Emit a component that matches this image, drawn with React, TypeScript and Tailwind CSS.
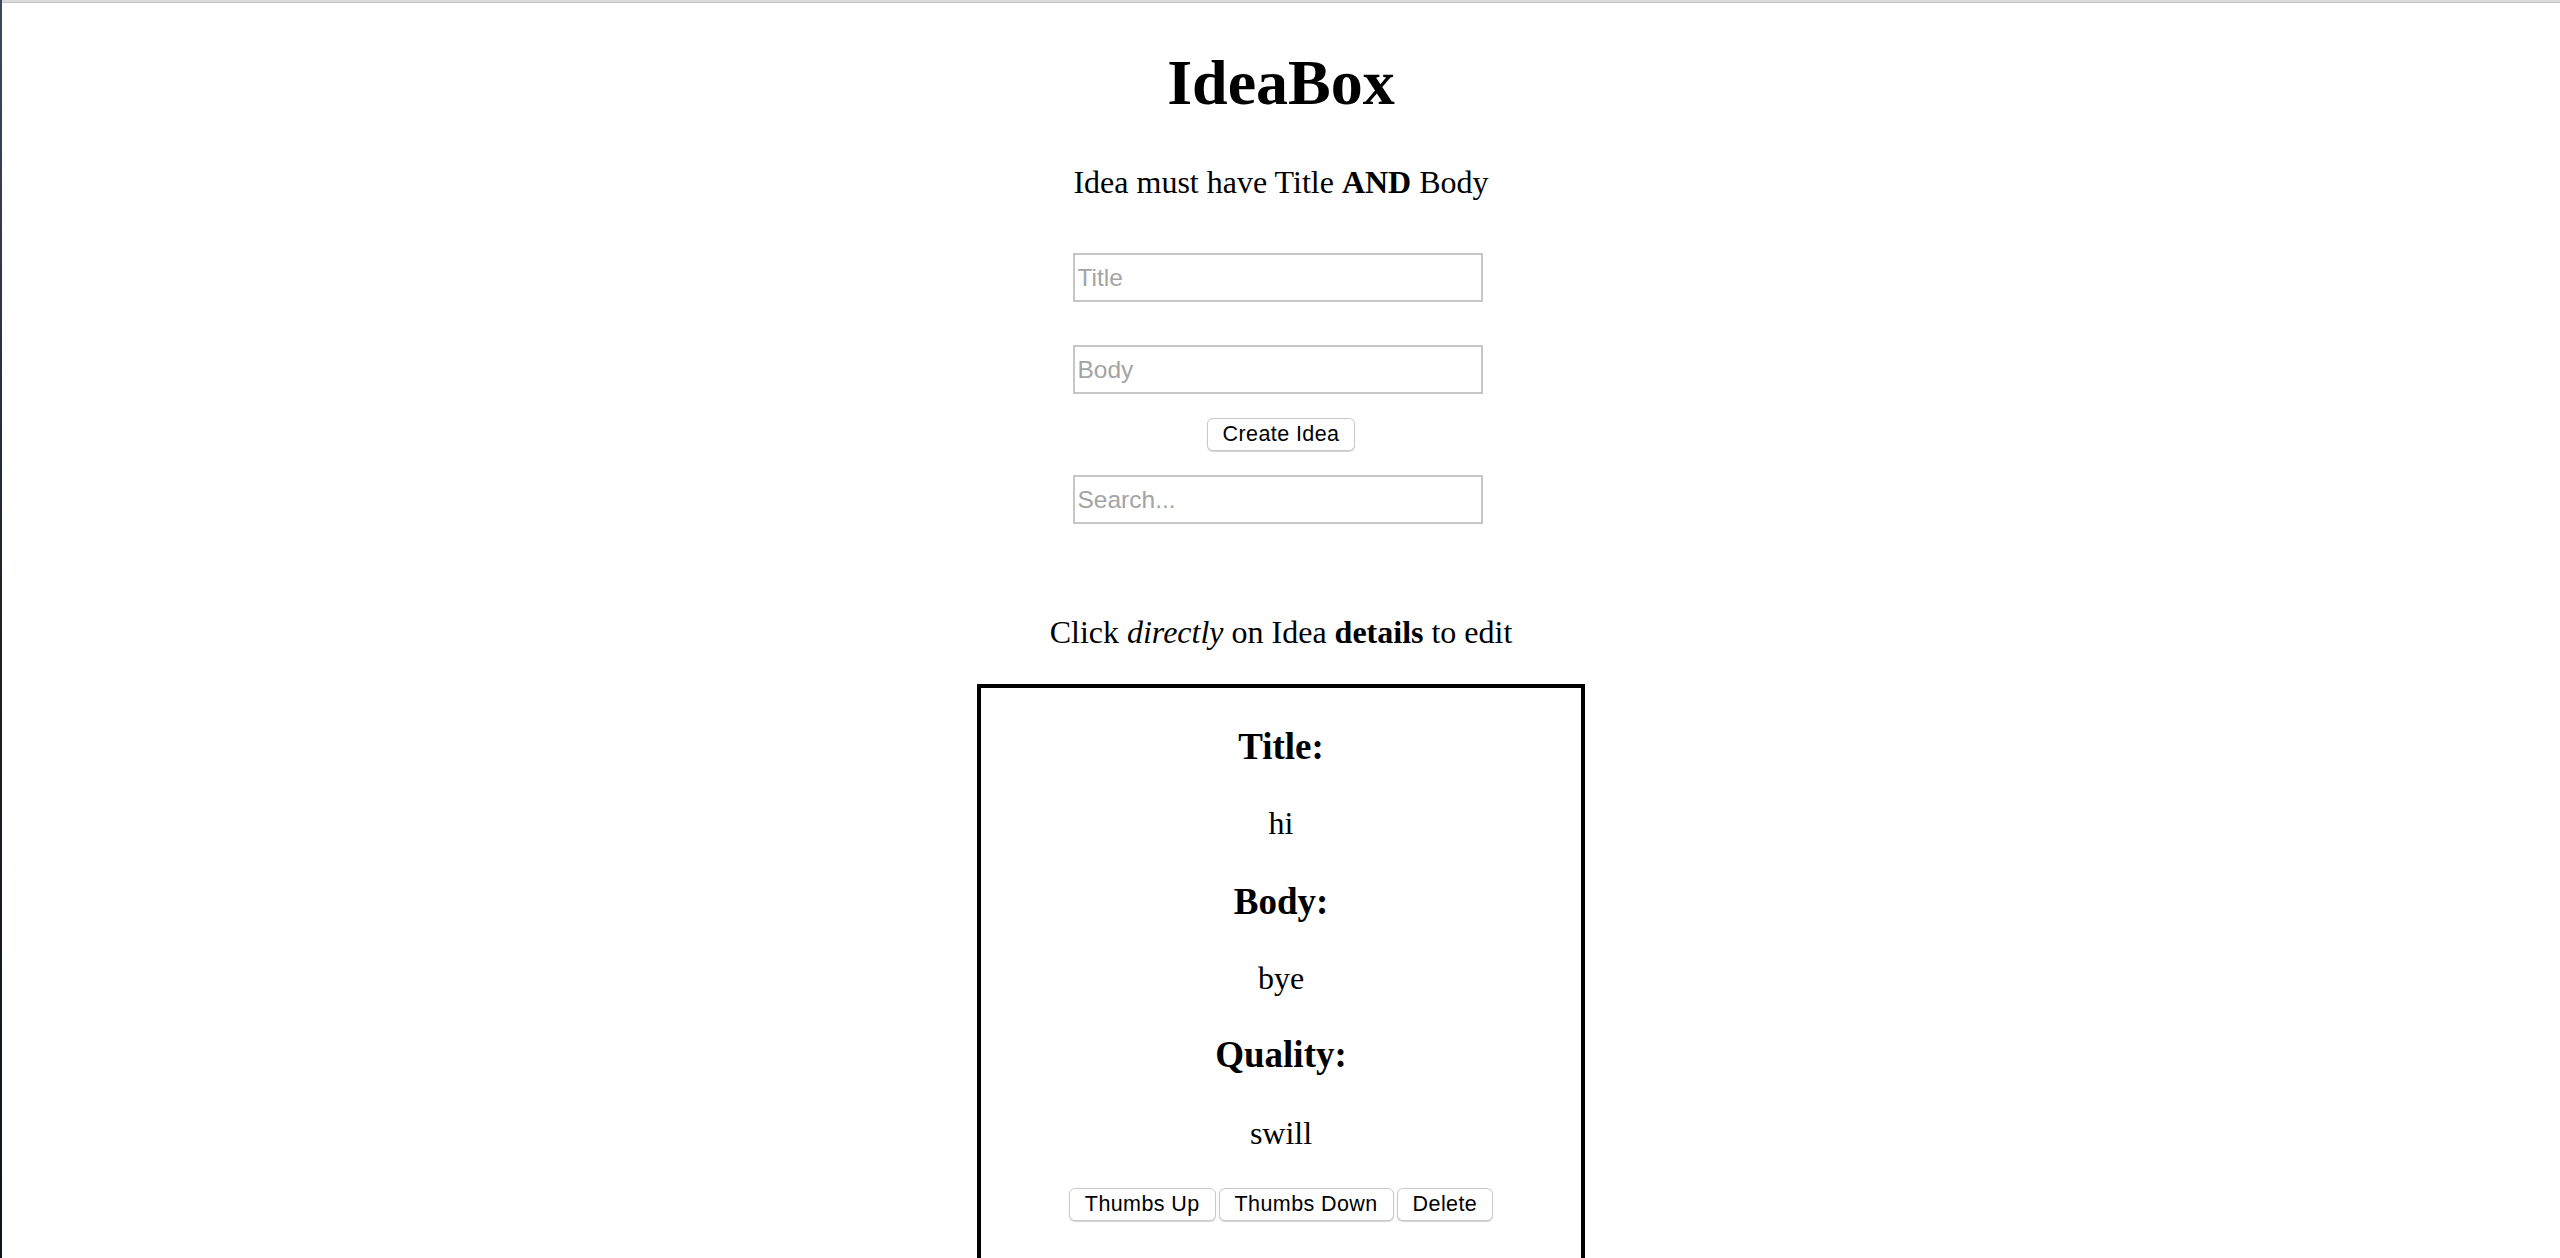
import React from "react";

const serif = "font-['Liberation_Serif','Times_New_Roman',serif]";

function Btn({ children }: { children: React.ReactNode }) {
  return (
    <button className="h-[33px] px-[15px] flex items-center justify-center bg-white border border-[#c9c9c9] rounded-[6px] shadow-[0_1px_1px_rgba(0,0,0,0.18)] font-['Liberation_Sans',Arial,sans-serif] text-[21.5px] tracking-[0.4px] text-black leading-none">
      {children}
    </button>
  );
}

function Field({ placeholder, className }: { placeholder: string; className?: string }) {
  return (
    <input
      placeholder={placeholder}
      className={
        "w-[410px] h-[49px] mr-[7px] border-2 border-[#c6c6c6] bg-white px-[3px] font-['Liberation_Sans',Arial,sans-serif] text-[24.5px] text-black placeholder:text-[#a4a4a4] outline-none " +
        (className ?? "")
      }
    />
  );
}

export default function App() {
  return (
    <div className="flex min-h-[1258px] w-full bg-white">
      <div className="w-[2px] shrink-0 bg-gradient-to-b from-[#3b4a63] via-[#1d1f2a] to-[#0e141c]" />
      <div className="flex-1 flex flex-col">
        <div className="h-[3px] bg-[#dadada] border-b border-[#c4c4c4]" />
        <div className={"flex flex-col items-center text-black " + serif}>
          <h1 className="mt-[48px] text-[64px] leading-[64px] font-bold">IdeaBox</h1>
          <p className="mt-[51px] text-[32px] leading-[32px]">
            Idea must have Title <b className="font-bold">AND</b> Body
          </p>
          <Field placeholder="Title" className="mt-[55px]" />
          <Field placeholder="Body" className="mt-[43px]" />
          <div className="mt-[24px]">
            <Btn>Create Idea</Btn>
          </div>
          <Field placeholder="Search..." className="mt-[24px]" />
          <p className="mt-[92px] text-[32px] leading-[32px]">
            Click <i className="italic">directly</i> on Idea <b className="font-bold">details</b> to edit
          </p>
          <div className="mt-[36px] w-[608px] border-4 border-black flex flex-col items-center pb-[60px]">
            <h3 className="mt-[37px] text-[37px] leading-[43px] font-bold">Title:</h3>
            <p className="mt-[37px] text-[32px] leading-[37px]">hi</p>
            <h3 className="mt-[38px] text-[37px] leading-[43px] font-bold">Body:</h3>
            <p className="mt-[37px] text-[32px] leading-[37px]">bye</p>
            <h3 className="mt-[36px] text-[37px] leading-[43px] font-bold">Quality:</h3>
            <p className="mt-[39px] text-[32px] leading-[37px]">swill</p>
            <div className="mt-[36px] flex gap-[3px]">
              <Btn>Thumbs Up</Btn>
              <Btn>Thumbs Down</Btn>
              <Btn>Delete</Btn>
            </div>
          </div>
        </div>
      </div>
    </div>
  );
}
